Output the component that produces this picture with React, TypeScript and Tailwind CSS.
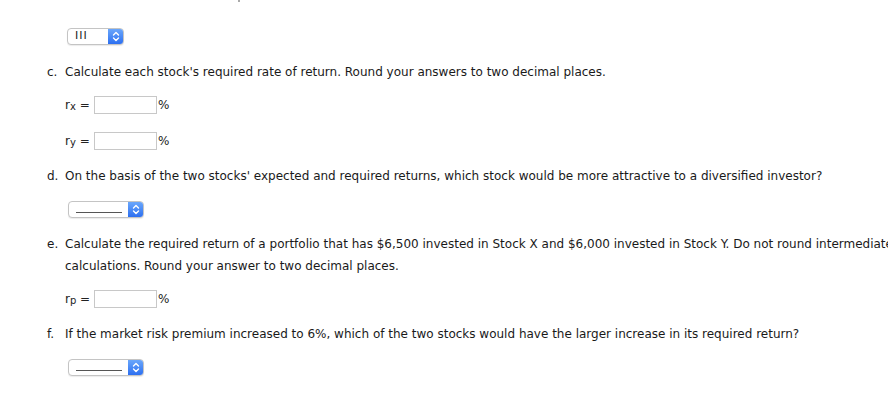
const font = { fontFamily: '"DejaVu Sans", Verdana, sans-serif' };

function Chevrons() {
  return (
    <svg width="8" height="11" viewBox="0 0 8 11" fill="none" stroke="white" strokeWidth="1.4" strokeLinecap="round" strokeLinejoin="round">
      <path d="M1.5 4 L4 1.5 L6.5 4" />
      <path d="M1.5 7 L4 9.5 L6.5 7" />
    </svg>
  );
}

function Select({ width, children }: { width: string; children: React.ReactNode }) {
  return (
    <div className={`flex h-[17px] ${width} rounded-[4px] border border-[#c4c4c4] bg-white shadow-[0_1px_1px_rgba(0,0,0,0.08)] overflow-hidden`}>
      <div className="flex-1 flex items-center pl-[7px] text-[11px] text-[#222]">{children}</div>
      <div className="w-[15px] flex items-center justify-center bg-gradient-to-b from-[#6aa6fb] to-[#2d6ff0]">
        <Chevrons />
      </div>
    </div>
  );
}

function Blank() {
  return <div className="w-[46px] h-px bg-[#555] mt-[6px]" />;
}

function RateRow({ sub, top }: { sub: string; top: string }) {
  return (
    <div className={`flex items-center h-[18px] ${top} pl-[65px]`}>
      <span className="text-[12px] text-[#222] w-[29px] shrink-0 leading-none">
        r<sub className="text-[10px] relative top-[1px]">{sub}</sub> =
      </span>
      <div className="w-[63px] h-[18px] shrink-0 border border-[#c8c8c8] bg-white" />
      <span className="text-[12px] text-[#222] ml-[1px]">%</span>
    </div>
  );
}

function Question({ letter, top, children }: { letter: string; top: string; children: React.ReactNode }) {
  return (
    <div className={`flex ${top} pl-[47px] text-[12px] leading-[22px] text-[#1a1a1a] whitespace-nowrap`}>
      <span className="w-[18px] shrink-0">{letter}</span>
      <span>{children}</span>
    </div>
  );
}

export default function App() {
  return (
    <div className="relative w-[888px] h-[401px] bg-white overflow-hidden" style={font}>
      <div className="absolute left-[238px] top-0 w-[2px] h-[2px] bg-[#aaa]" />
      <div className="pt-[28px] pl-[67px]">
        <Select width="w-[57px]">
          <span className="tracking-[1px]">III</span>
        </Select>
      </div>
      <Question letter="c." top="mt-[16px]">
        Calculate each stock's required rate of return. Round your answers to two decimal places.
      </Question>
      <RateRow sub="x" top="mt-[13px]" />
      <RateRow sub="y" top="mt-[18px]" />
      <Question letter="d." top="mt-[15px]">
        On the basis of the two stocks' expected and required returns, which stock would be more attractive to a diversified investor?
      </Question>
      <div className="pt-[14px] pl-[68px]">
        <Select width="w-[76px]">
          <Blank />
        </Select>
      </div>
      <Question letter="e." top="mt-[15px]">
        Calculate the required return of a portfolio that has $6,500 invested in Stock X and $6,000 invested in Stock Y. Do not round intermediate
        <br />
        calculations. Round your answer to two decimal places.
      </Question>
      <RateRow sub="p" top="mt-[13px]" />
      <Question letter="f." top="mt-[15px]">
        If the market risk premium increased to 6%, which of the two stocks would have the larger increase in its required return?
      </Question>
      <div className="pt-[14px] pl-[68px]">
        <Select width="w-[76px]">
          <Blank />
        </Select>
      </div>
    </div>
  );
}
